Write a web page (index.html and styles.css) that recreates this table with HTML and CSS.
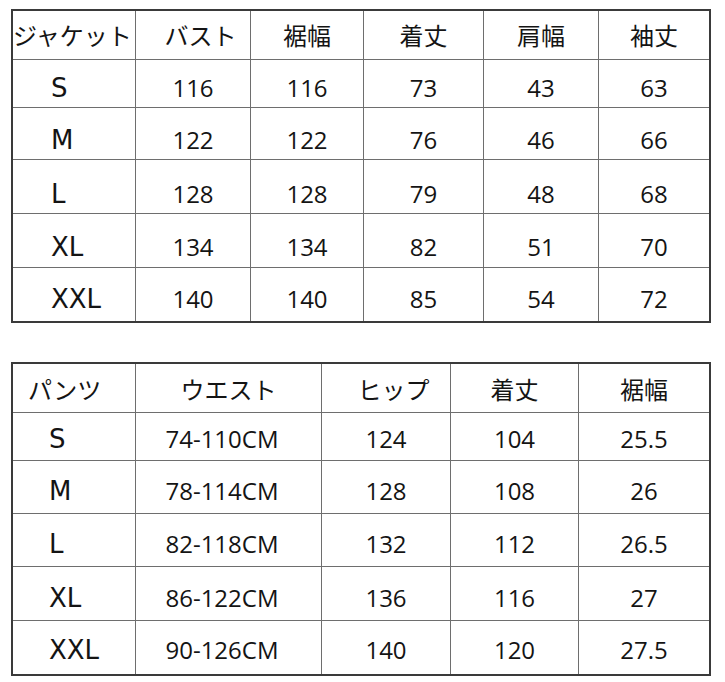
FILE: index.html
```html
<!DOCTYPE html>
<html lang="ja">
<head>
<meta charset="utf-8">
<title>サイズ表</title>
<link rel="stylesheet" href="styles.css">
</head>
<body>
<div class="page">
  <div class="sheet jacket">
    <div class="row head">
      <div class="cell lab-h">ジャケット</div>
      <div class="cell shift-r">バスト</div>
      <div class="cell">裾幅</div>
      <div class="cell">着丈</div>
      <div class="cell">肩幅</div>
      <div class="cell">袖丈</div>
    </div>
    <div class="row r1">
      <div class="cell lab">S</div><div class="cell">116</div><div class="cell">116</div><div class="cell">73</div><div class="cell">43</div><div class="cell">63</div>
    </div>
    <div class="row r2">
      <div class="cell lab">M</div><div class="cell">122</div><div class="cell">122</div><div class="cell">76</div><div class="cell">46</div><div class="cell">66</div>
    </div>
    <div class="row r3">
      <div class="cell lab">L</div><div class="cell">128</div><div class="cell">128</div><div class="cell">79</div><div class="cell">48</div><div class="cell">68</div>
    </div>
    <div class="row r4">
      <div class="cell lab">XL</div><div class="cell">134</div><div class="cell">134</div><div class="cell">82</div><div class="cell">51</div><div class="cell">70</div>
    </div>
    <div class="row r5">
      <div class="cell lab">XXL</div><div class="cell">140</div><div class="cell">140</div><div class="cell">85</div><div class="cell">54</div><div class="cell">72</div>
    </div>
  </div>

  <div class="sheet pants">
    <div class="row head">
      <div class="cell lab-h2">パンツ</div>
      <div class="cell">ウエスト</div>
      <div class="cell shift-r">ヒップ</div>
      <div class="cell">着丈</div>
      <div class="cell">裾幅</div>
    </div>
    <div class="row q1">
      <div class="cell lab">S</div><div class="cell shift-l">74-110CM</div><div class="cell">124</div><div class="cell">104</div><div class="cell">25.5</div>
    </div>
    <div class="row q2">
      <div class="cell lab">M</div><div class="cell shift-l">78-114CM</div><div class="cell">128</div><div class="cell">108</div><div class="cell">26</div>
    </div>
    <div class="row q3">
      <div class="cell lab">L</div><div class="cell shift-l">82-118CM</div><div class="cell">132</div><div class="cell">112</div><div class="cell">26.5</div>
    </div>
    <div class="row q4">
      <div class="cell lab">XL</div><div class="cell shift-l">86-122CM</div><div class="cell">136</div><div class="cell">116</div><div class="cell">27</div>
    </div>
    <div class="row q5">
      <div class="cell lab">XXL</div><div class="cell shift-l">90-126CM</div><div class="cell">140</div><div class="cell">120</div><div class="cell">27.5</div>
    </div>
  </div>
</div>
</body>
</html>
```

FILE: styles.css
```css
html, body {
  margin: 0;
  padding: 0;
  background: #ffffff;
}

.page {
  padding: 9px 0 0 11px;
  font-family: "Open Sans", "Noto Sans CJK JP", sans-serif;
  font-size: 24px;
  line-height: 24px;
  color: #141414;
}

.sheet {
  width: 696px;
  border: 2px solid #3a3a3a;
  background: #6e6e6e;
  display: flex;
  flex-direction: column;
  gap: 1px;
}

.pants {
  margin-top: 39px;
}

.row {
  display: grid;
  gap: 1px;
}

.jacket .row {
  grid-template-columns: 122px 114px 112px 119px 114px 110px;
}

.pants .row {
  grid-template-columns: 122px 185px 128px 127px 130px;
}

.cell {
  background: #ffffff;
  display: flex;
  align-items: center;
  justify-content: center;
  white-space: nowrap;
  box-sizing: border-box;
}

.lab {
  justify-content: flex-start;
  padding-left: 38px;
  font-family: "DejaVu Sans", "Open Sans", sans-serif;
  font-size: 26px;
}

.pants .lab {
  padding-left: 36px;
}

.lab-h {
  justify-content: flex-start;
  padding-left: 0;
}

.lab-h2 {
  justify-content: flex-start;
  padding-left: 15px;
}

.shift-r {
  padding-left: 15px;
}

.shift-l {
  padding-right: 13px;
}

/* jacket rows */
.jacket .head { height: 48px; }
.jacket .head .cell { padding-top: 2px; }
.r1 { height: 47px; }
.r1 .cell { padding-top: 9px; }
.r2 { height: 51px; }
.r2 .cell { padding-top: 13px; }
.r3 { height: 53px; }
.r3 .cell { padding-top: 15px; }
.r4 { height: 53px; }
.r4 .cell { padding-top: 12px; }
.r5 { height: 53px; }
.r5 .cell { padding-top: 9px; }

/* pants rows */
.pants .head { height: 48px; }
.pants .head .cell { padding-top: 4px; }
.q1 { height: 47px; }
.q1 .cell { padding-top: 5px; }
.q2 { height: 52px; }
.q2 .cell { padding-top: 7px; }
.q3 { height: 52px; }
.q3 .cell { padding-top: 8px; }
.q4 { height: 53px; }
.q4 .cell { padding-top: 9px; }
.q5 { height: 53px; }
.q5 .cell { padding-top: 5px; }
```
